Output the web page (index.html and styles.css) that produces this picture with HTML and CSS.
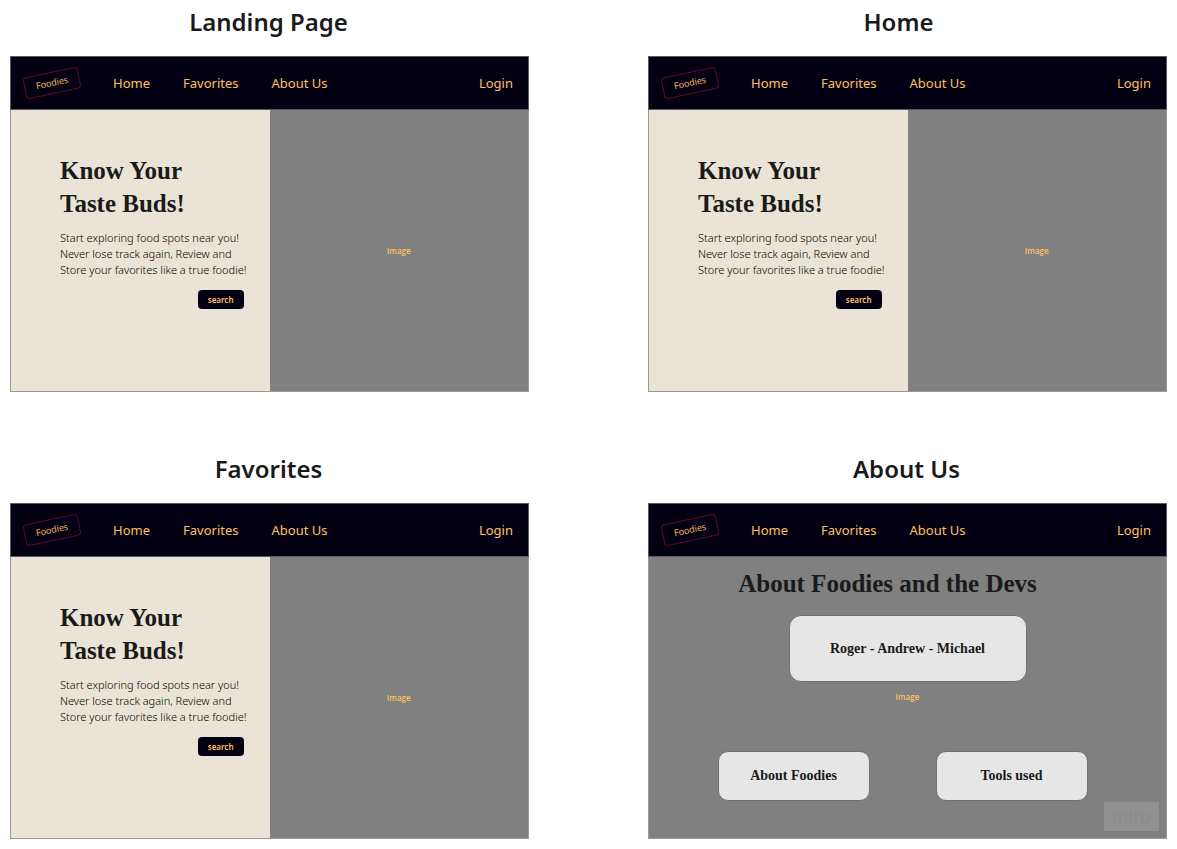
FILE: index.html
```html
<!DOCTYPE html>
<html lang="en">
<head>
<meta charset="utf-8">
<meta name="viewport" content="width=device-width, initial-scale=1">
<title>Foodies wireframes</title>
<link rel="stylesheet" href="styles.css">
</head>
<body>
<main class="board">
  <section class="screen">
    <h1 class="screen-title">Landing Page</h1>
    <div class="frame">
      <nav class="nav">
        <a class="logo" href="#">Foodies</a>
        <a class="nav-link" href="#">Home</a>
        <a class="nav-link" href="#">Favorites</a>
        <a class="nav-link" href="#">About Us</a>
        <a class="nav-link login" href="#">Login</a>
      </nav>
      <div class="split">
        <div class="intro">
          <h2 class="headline">Know Your<br>Taste Buds!</h2>
          <p class="copy">Start exploring food spots near you!<br>Never lose track again, Review and<br>Store your favorites like a true foodie!</p>
          <button class="search" type="button">search</button>
        </div>
        <div class="image">Image</div>
      </div>
    </div>
  </section>

  <section class="screen">
    <h1 class="screen-title title-home">Home</h1>
    <div class="frame">
      <nav class="nav">
        <a class="logo" href="#">Foodies</a>
        <a class="nav-link" href="#">Home</a>
        <a class="nav-link" href="#">Favorites</a>
        <a class="nav-link" href="#">About Us</a>
        <a class="nav-link login" href="#">Login</a>
      </nav>
      <div class="split">
        <div class="intro">
          <h2 class="headline">Know Your<br>Taste Buds!</h2>
          <p class="copy">Start exploring food spots near you!<br>Never lose track again, Review and<br>Store your favorites like a true foodie!</p>
          <button class="search" type="button">search</button>
        </div>
        <div class="image">Image</div>
      </div>
    </div>
  </section>

  <section class="screen">
    <h1 class="screen-title">Favorites</h1>
    <div class="frame">
      <nav class="nav">
        <a class="logo" href="#">Foodies</a>
        <a class="nav-link" href="#">Home</a>
        <a class="nav-link" href="#">Favorites</a>
        <a class="nav-link" href="#">About Us</a>
        <a class="nav-link login" href="#">Login</a>
      </nav>
      <div class="split">
        <div class="intro">
          <h2 class="headline">Know Your<br>Taste Buds!</h2>
          <p class="copy">Start exploring food spots near you!<br>Never lose track again, Review and<br>Store your favorites like a true foodie!</p>
          <button class="search" type="button">search</button>
        </div>
        <div class="image">Image</div>
      </div>
    </div>
  </section>

  <section class="screen">
    <h1 class="screen-title">About Us</h1>
    <div class="frame">
      <nav class="nav">
        <a class="logo" href="#">Foodies</a>
        <a class="nav-link" href="#">Home</a>
        <a class="nav-link" href="#">Favorites</a>
        <a class="nav-link" href="#">About Us</a>
        <a class="nav-link login" href="#">Login</a>
      </nav>
      <div class="about">
        <h2 class="headline about-title">About Foodies and the Devs</h2>
        <div class="card team">Roger - Andrew - Michael</div>
        <p class="image-label">Image</p>
        <div class="cards">
          <div class="card">About Foodies</div>
          <div class="card">Tools used</div>
        </div>
        <span class="watermark">miro</span>
      </div>
    </div>
  </section>
</main>
</body>
</html>
```

FILE: styles.css
```css
* {
  box-sizing: border-box;
}

body {
  margin: 0;
  background: #fff;
  color: #1a1a1a;
  font-family: "Open Sans", "Noto Sans", sans-serif;
}

.board {
  display: grid;
  grid-template-columns: 1fr 1fr;
  gap: 55px 119px;
  padding: 0 10px 10px;
}

.screen-title {
  margin: 0;
  padding: 5px 2px 17px 0;
  font-family: "Noto Sans", "Open Sans", sans-serif;
  font-size: 24px;
  font-weight: 600;
  line-height: 34px;
  text-align: center;
}

.title-home {
  padding-right: 18px;
}

.frame {
  display: flex;
  flex-direction: column;
  border: 1px solid #999;
}

.nav {
  display: flex;
  align-items: center;
  min-height: 54px;
  margin: -1px -1px 0;
  padding: 0 15px 0 13px;
  gap: 33px;
  background: #030014;
  border: 1px solid #5a5a60;
}

.nav a {
  color: #ffc061;
  text-decoration: none;
}

.nav-link {
  font-family: "Noto Sans", "Open Sans", sans-serif;
  font-size: 13px;
  line-height: 18px;
}

.login {
  margin-left: auto;
}

.nav .logo {
  width: 56px;
  border: 1px solid #5c0a2c;
  border-radius: 4px;
  font-size: 9px;
  font-weight: 500;
  line-height: 20px;
  text-align: center;
  transform: rotate(-12deg);
}

.split {
  display: grid;
  grid-template-columns: minmax(0, 1fr) minmax(0, 1fr);
  min-height: 281px;
}

.intro {
  display: flex;
  flex-direction: column;
  align-items: flex-start;
  padding: 44px 26px 16px 49px;
  background: #eae4d7;
  white-space: nowrap;
}

.headline {
  margin: 0;
  font-family: "Liberation Serif", serif;
  font-size: 25px;
  font-weight: 700;
  line-height: 33px;
}

.copy {
  margin: 10px 0 12px;
  color: #000;
  font-family: "Noto Sans", "Open Sans", sans-serif;
  font-size: 11px;
  font-weight: 300;
  line-height: 16px;
}

.search {
  align-self: flex-end;
  padding: 0 10px;
  border: 0;
  border-radius: 4px;
  background: #030014;
  color: #ffc061;
  font: 600 8px/19px "Noto Sans", "Open Sans", sans-serif;
}

.image {
  display: flex;
  align-items: center;
  justify-content: center;
  background: #808080;
  color: #ffc061;
  font-size: 8px;
  font-weight: 600;
}

.about {
  position: relative;
  display: flex;
  flex-direction: column;
  align-items: center;
  min-height: 281px;
  padding: 10px 20px 37px;
  background: #808080;
}

.about-title {
  padding-right: 40px;
}

.card {
  min-width: 152px;
  border: 1px solid #707070;
  border-radius: 10px;
  background: #e6e6e6;
  font-family: "Liberation Serif", serif;
  font-size: 14px;
  font-weight: 700;
  line-height: 48px;
  text-align: center;
}

.team {
  width: 238px;
  margin-top: 15px;
  border-radius: 12px;
  line-height: 65px;
}

.image-label {
  margin: 8px 0 0;
  color: #ffc061;
  font-size: 8px;
  font-weight: 600;
  line-height: 14px;
}

.cards {
  display: flex;
  gap: 66px;
  margin-top: auto;
  padding-right: 10px;
}

.watermark {
  position: absolute;
  right: 7px;
  bottom: 7px;
  width: 55px;
  background: #919191;
  color: #8c8b94;
  font-family: Inter, sans-serif;
  font-size: 18px;
  font-weight: 600;
  line-height: 29px;
  text-align: center;
}
```
